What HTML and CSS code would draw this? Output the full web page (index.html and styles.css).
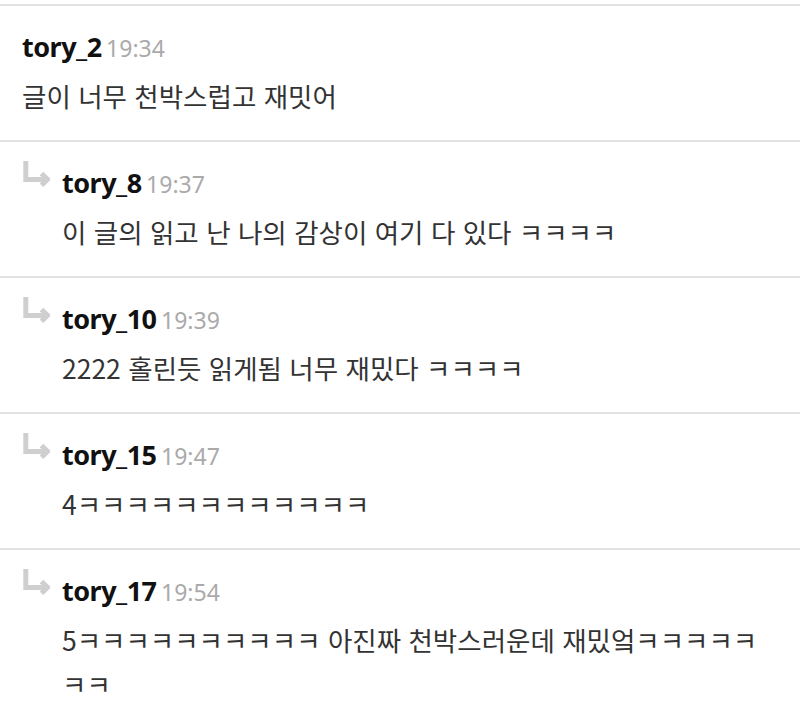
FILE: index.html
```html
<!DOCTYPE html>
<html lang="ko">
<head>
    <meta charset="UTF-8">
    <title>댓글</title>
    <link rel="stylesheet" href="styles.css">
</head>
<body>

<div class="comments">
    <div class="comment">
        <div class="body">
            <div class="meta"><span class="name">tory_2</span> <span class="time">19:34</span></div>
            <div class="text">글이 너무 천박스럽고 재밋어</div>
        </div>
    </div>

    <div class="comment reply">
        <svg class="arrow" viewBox="0 0 30 32"><path d="M5.8 3V21.4H27M21.5 15.5L27.5 21.4L21.5 27.3"/></svg>
        <div class="body">
            <div class="meta"><span class="name">tory_8</span> <span class="time">19:37</span></div>
            <div class="text">이 글의 읽고 난 나의 감상이 여기 다 있다 ㅋㅋㅋㅋ</div>
        </div>
    </div>

    <div class="comment reply">
        <svg class="arrow" viewBox="0 0 30 32"><path d="M5.8 3V21.4H27M21.5 15.5L27.5 21.4L21.5 27.3"/></svg>
        <div class="body">
            <div class="meta"><span class="name">tory_10</span> <span class="time">19:39</span></div>
            <div class="text">2222 홀린듯 읽게됨 너무 재밌다 ㅋㅋㅋㅋ</div>
        </div>
    </div>

    <div class="comment reply">
        <svg class="arrow" viewBox="0 0 30 32"><path d="M5.8 3V21.4H27M21.5 15.5L27.5 21.4L21.5 27.3"/></svg>
        <div class="body">
            <div class="meta"><span class="name">tory_15</span> <span class="time">19:47</span></div>
            <div class="text">4ㅋㅋㅋㅋㅋㅋㅋㅋㅋㅋㅋㅋ</div>
        </div>
    </div>

    <div class="comment reply">
        <svg class="arrow" viewBox="0 0 30 32"><path d="M5.8 3V21.4H27M21.5 15.5L27.5 21.4L21.5 27.3"/></svg>
        <div class="body">
            <div class="meta"><span class="name">tory_17</span> <span class="time">19:54</span></div>
            <div class="text">5ㅋㅋㅋㅋㅋㅋㅋㅋㅋㅋ 아진짜 천박스러운데 재밌엌ㅋㅋㅋㅋㅋㅋㅋ</div>
        </div>
    </div>
</div>

</body>
</html>
```

FILE: styles.css
```css
body {
    margin: 0;
    padding-top: 4px;
    background-color: #fff;
    font-family: 'Noto Sans CJK KR', 'Noto Sans', sans-serif;
    color: #333;
}
.comments {
    display: flex;
    flex-direction: column;
}
.comment {
    display: flex;
    border-top: 2px solid #e2e2e2;
    padding: 21px 30px 22px 22px;
    min-height: 91px;
}
.comment.reply {
    padding-left: 20px;
    gap: 12px;
}
.arrow {
    flex: none;
    width: 30px;
    height: 32px;
    margin-top: -5px;
    fill: none;
    stroke: #cfcfcf;
    stroke-width: 5;
}
.body {
    flex: 1;
    min-width: 0;
}
.meta {
    line-height: 40px;
    height: 40px;
}
.name {
    font-family: 'Noto Sans', sans-serif;
    font-weight: bold;
    font-size: 27px;
    color: #111;
    letter-spacing: -0.5px;
}
.time {
    font-family: 'Noto Sans', sans-serif;
    font-size: 23px;
    color: #aaa;
}
.text {
    margin-top: 7px;
    font-size: 26.5px;
    line-height: 44px;
    color: #333;
}
```
